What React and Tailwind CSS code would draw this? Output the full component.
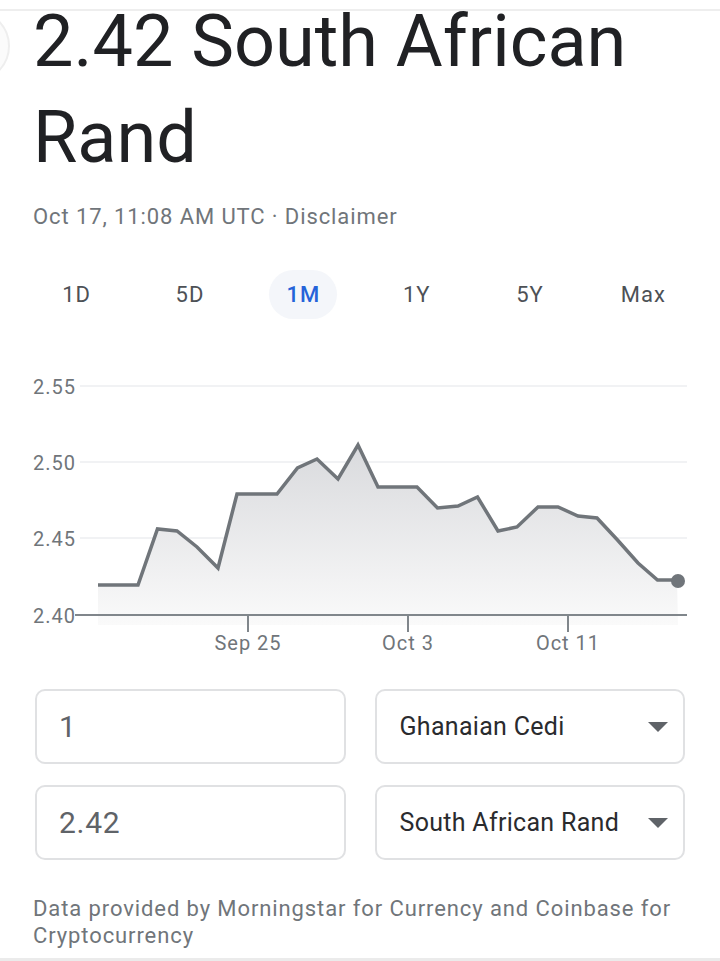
import { useState } from 'react'

const RANGES = ['1D', '5D', '1M', '1Y', '5Y', 'Max']

const POINTS = [
  [98, 215], [138, 215], [157.5, 159], [177, 161], [197, 177], [218, 198],
  [237, 124], [277, 124], [297.5, 98], [317, 89], [338, 109], [358, 75],
  [378, 117], [417, 117], [437.5, 138], [458, 136], [477.5, 127], [498, 161],
  [517, 157], [538, 137], [558, 137], [578, 146], [597, 148], [617.5, 170],
  [638, 193], [657.5, 210], [677, 210],
]

const Y_LABELS = [
  { label: '2.55', y: 16 },
  { label: '2.50', y: 92 },
  { label: '2.45', y: 168 },
]

const X_TICKS = [
  { label: 'Sep 25', x: 248 },
  { label: 'Oct 3', x: 408 },
  { label: 'Oct 11', x: 568 },
]

function Chart() {
  const line = POINTS.map(([x, y]) => `${x},${y}`).join(' ')
  const area = `98,255 ${line} 678,255`
  const last = POINTS[POINTS.length - 1]

  return (
    <svg width="720" height="290" viewBox="0 0 720 290" className="block">
      <defs>
        <linearGradient id="fill" x1="0" y1="0" x2="0" y2="1">
          <stop offset="0%" stopColor="#d9dadd" />
          <stop offset="100%" stopColor="#fafafa" />
        </linearGradient>
      </defs>
      {Y_LABELS.map((item) => (
        <line key={item.label} x1="80" x2="687" y1={item.y} y2={item.y} stroke="#f1f2f4" strokeWidth="2" />
      ))}
      <polygon points={area} fill="url(#fill)" />
      <polyline points={line} fill="none" stroke="#70757a" strokeWidth="3.5" strokeLinejoin="miter" />
      <circle cx={last[0] + 1} cy={last[1] + 1} r="7" fill="#70757a" />
      <line x1="75" x2="687" y1="245" y2="245" stroke="#80868b" strokeWidth="2" />
      {X_TICKS.map((tick) => (
        <line key={tick.label} x1={tick.x} x2={tick.x} y1="245" y2="262" stroke="#80868b" strokeWidth="2" />
      ))}
      <g fill="#70757a" fontFamily="Roboto, sans-serif" fontSize="20" letterSpacing="1">
        {[...Y_LABELS, { label: '2.40', y: 245 }].map((item) => (
          <text key={item.label} x="33" y={item.y + 7.5}>
            {item.label}
          </text>
        ))}
        {X_TICKS.map((tick) => (
          <text key={tick.label} x={tick.x} y="280" textAnchor="middle">
            {tick.label}
          </text>
        ))}
      </g>
    </svg>
  )
}

function Caret() {
  return (
    <svg width="20" height="10" viewBox="0 0 20 10" className="shrink-0">
      <path d="M0 0h20L10 10z" fill="#5f6368" />
    </svg>
  )
}

export default function App() {
  const [range, setRange] = useState('1M')

  return (
    <div className="relative h-[961px] w-[720px] overflow-hidden bg-white font-['Roboto',sans-serif]">
      <div className="absolute inset-x-0 top-[9px] h-[2px] bg-[#eeeeee]" />
      <div className="absolute left-[-62px] top-[10px] h-[72px] w-[72px] rounded-full border-2 border-[#eeeeee] bg-[#fbfbfb]" />

      <div className="relative px-[33px]">
        <h1 className="mt-[-6px] text-[72px] leading-[96px] text-[#202124]">2.42 South African Rand</h1>
        <p className="mt-[17px] text-[22px] leading-[28px] tracking-[0.9px] text-[#70757a]">
          Oct 17, 11:08 AM UTC · Disclaimer
        </p>

        <div className="-mx-[13px] mt-[39px] grid grid-cols-6">
          {RANGES.map((item) => (
            <div key={item} className="flex justify-center">
              <button
                type="button"
                onClick={() => setRange(item)}
                className={`flex h-[49px] items-center rounded-full px-[17px] text-[22px] tracking-[1px] ${
                  range === item ? 'bg-[#f4f6fa] font-medium text-[#2563d9]' : 'text-[#4d5156]'
                }`}
              >
                {item}
              </button>
            </div>
          ))}
        </div>

        <div className="-mx-[33px] mt-[51px]">
          <Chart />
        </div>

        <div className="mx-[2px] mt-[29px] grid grid-cols-2 gap-x-[29px] gap-y-[21px]">
          <div className="flex h-[75px] items-center rounded-[10px] border-2 border-[#e0e1e3] pl-[22px] text-[30px] tracking-[0.7px] text-[#5f6368]">
            1
          </div>
          <div className="flex h-[75px] items-center justify-between rounded-[10px] border-2 border-[#e0e1e3] pl-[23px] pr-[15px] text-[25px] tracking-[0.3px] text-[#2a2b2e]">
            <span>Ghanaian Cedi</span>
            <Caret />
          </div>
          <div className="flex h-[75px] items-center rounded-[10px] border-2 border-[#e0e1e3] pl-[22px] text-[30px] tracking-[0.7px] text-[#5f6368]">
            2.42
          </div>
          <div className="flex h-[75px] items-center justify-between rounded-[10px] border-2 border-[#e0e1e3] pl-[23px] pr-[15px] text-[25px] tracking-[0.3px] text-[#2a2b2e]">
            <span>South African Rand</span>
            <Caret />
          </div>
        </div>

        <p className="mt-[35px] text-[22px] leading-[27px] tracking-[0.9px] text-[#70757a]">
          Data provided by Morningstar for Currency and Coinbase for Cryptocurrency
        </p>
      </div>

      <div className="absolute inset-x-0 bottom-0 h-[3px] bg-[#ebebeb]" />
    </div>
  )
}
